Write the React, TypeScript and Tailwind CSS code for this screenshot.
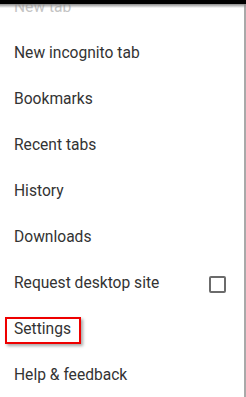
import React from "react";

const items = [
  "New incognito tab",
  "Bookmarks",
  "Recent tabs",
  "History",
  "Downloads",
];

export default function App() {
  return (
    <div
      className="relative w-[246px] h-[397px] overflow-hidden bg-white"
      style={{ fontFamily: "Roboto, 'Noto Sans', sans-serif" }}
    >
      <div className="flex h-full">
        <div className="flex-1 flex flex-col -mt-[15px]">
          <div className="h-[46px] shrink-0 flex items-center pl-[14px] text-[15.6px] text-[#c4c4c4]">
            New tab
          </div>
          {items.map((t) => (
            <div
              key={t}
              className="h-[46px] shrink-0 flex items-center pl-[14px] text-[15.6px] text-[#333333]"
            >
              {t}
            </div>
          ))}
          <div className="h-[46px] shrink-0 flex items-center justify-between pl-[14px] pr-[18px] text-[15.6px] text-[#333333]">
            <span>Request desktop site</span>
            <span className="w-[17px] h-[17px] border-2 border-[#6b6b6b] rounded-[2px]" />
          </div>
          <div className="relative h-[46px] shrink-0 flex items-center pl-[14px] text-[15.6px] text-[#333333]">
            Settings
            <div className="absolute left-[5px] top-[10px] w-[76px] h-[27px] border-2 border-[#ee0000] shadow-[2px_2px_3px_rgba(0,0,0,0.35)]" />
          </div>
          <div className="h-[46px] shrink-0 flex items-center pl-[14px] text-[15.6px] text-[#333333]">
            Help &amp; feedback
          </div>
        </div>
        <div className="w-[2px] shrink-0 bg-[#a9a9a9]" />
      </div>
      <div className="absolute top-0 left-0 right-0 h-[4px] bg-black" />
      <div className="absolute top-[4px] left-0 right-0 h-[4px] bg-gradient-to-b from-[#8a8a8a] to-transparent" />
    </div>
  );
}
